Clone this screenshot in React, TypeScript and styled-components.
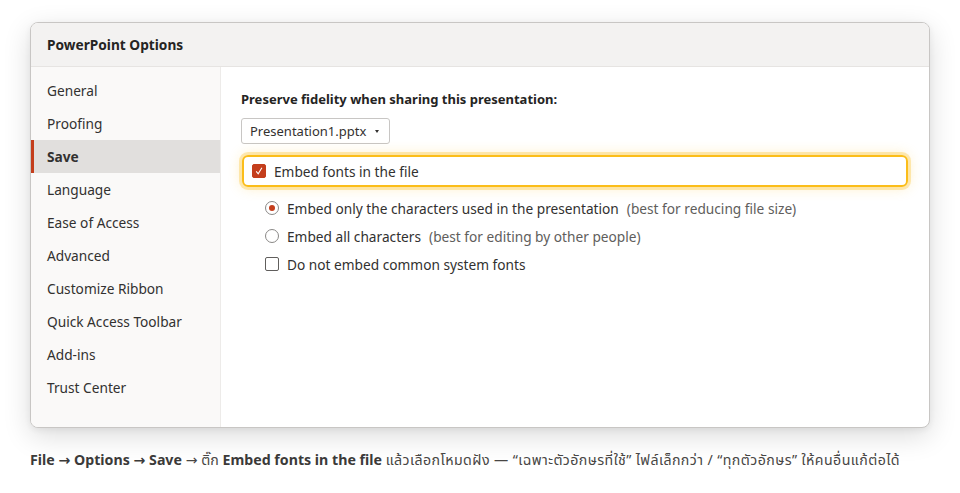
import React from "react";
import styled, { createGlobalStyle } from "styled-components";

const Global = createGlobalStyle`
  html, body { margin: 0; padding: 0; background: #ffffff; }
  body { font-family: "Noto Sans", "Noto Sans Thai", "DejaVu Sans", sans-serif; color: #323130; }
  * { box-sizing: border-box; }
`;

const Page = styled.div`
  width: 960px;
  height: 493px;
  padding: 22px 30px 0 30px;
  display: flex;
  flex-direction: column;
`;

const Window = styled.div`
  width: 900px;
  height: 406px;
  border: 1px solid #c8c6c4;
  border-radius: 8px;
  overflow: hidden;
  display: flex;
  flex-direction: column;
  box-shadow: 0 8px 28px rgba(0, 0, 0, 0.14), 0 2px 6px rgba(0, 0, 0, 0.06);
  background: #ffffff;
`;

const Header = styled.div`
  height: 44px;
  flex: none;
  background: #f3f2f1;
  border-bottom: 1px solid #e6e4e2;
  display: flex;
  align-items: center;
  padding-left: 16px;
  font-size: 13.7px;
  font-weight: 700;
  color: #252423;
`;

const Body = styled.div`
  flex: 1;
  display: flex;
  min-height: 0;
`;

const Sidebar = styled.nav`
  width: 190px;
  flex: none;
  background: #faf9f8;
  border-right: 1px solid #edebe9;
  padding-top: 7px;
  display: flex;
  flex-direction: column;
`;

const NavItem = styled.div<{ $active?: boolean }>`
  height: 33px;
  display: flex;
  align-items: center;
  padding-left: 16px;
  font-size: 13.7px;
  color: #323130;
  font-weight: ${(p) => (p.$active ? 700 : 400)};
  background: ${(p) => (p.$active ? "#e1dfdd" : "transparent")};
  box-shadow: ${(p) => (p.$active ? "inset 3px 0 0 #c43e1c" : "none")};
`;

const Content = styled.div`
  flex: 1;
  padding: 23px 20px 0 20px;
  display: flex;
  flex-direction: column;
`;

const SectionTitle = styled.div`
  font-size: 13px;
  font-weight: 700;
  color: #252423;
  line-height: 18px;
`;

const Select = styled.div`
  margin-top: 10px;
  align-self: flex-start;
  height: 26px;
  border: 1px solid #c8c6c4;
  border-radius: 3px;
  display: flex;
  align-items: center;
  gap: 9px;
  padding: 0 10px 0 8px;
  font-size: 13px;
  color: #323130;
  background: #fff;
`;

const Caret = styled.span`
  width: 0;
  height: 0;
  border-left: 2.5px solid transparent;
  border-right: 2.5px solid transparent;
  border-top: 3px solid #323130;
`;

const HighlightRow = styled.div`
  margin-top: 11px;
  margin-left: 1px;
  width: 666px;
  height: 32px;
  border: 2px solid #fbbd19;
  border-radius: 6px;
  box-shadow: 0 0 0 3px rgba(251, 189, 25, 0.3), 0 0 14px rgba(251, 189, 25, 0.3);
  display: flex;
  align-items: center;
  gap: 8px;
  padding-left: 8px;
  font-size: 13.7px;
  color: #323130;
`;

const CheckBox = styled.span<{ $checked?: boolean }>`
  width: 14px;
  height: 14px;
  flex: none;
  border-radius: 2px;
  border: 1px solid ${(p) => (p.$checked ? "#c43e1c" : "#605e5c")};
  background: ${(p) => (p.$checked ? "#c43e1c" : "#fff")};
  display: flex;
  align-items: center;
  justify-content: center;
`;

const Options = styled.div`
  margin-top: 7px;
  padding-left: 24px;
  display: flex;
  flex-direction: column;
`;

const OptionRow = styled.div`
  height: 28px;
  display: flex;
  align-items: center;
  gap: 8px;
  font-size: 13.7px;
  color: #323130;
`;

const Radio = styled.span<{ $checked?: boolean }>`
  width: 14px;
  height: 14px;
  flex: none;
  border-radius: 50%;
  border: 1px solid #8a8886;
  background: #fff;
  display: flex;
  align-items: center;
  justify-content: center;
  &::after {
    content: "";
    width: 6px;
    height: 6px;
    border-radius: 50%;
    background: ${(p) => (p.$checked ? "#c43e1c" : "transparent")};
  }
`;

const Hint = styled.span`
  color: #605e5c;
`;

const Caption = styled.p`
  margin: 23px 0 0 0;
  font-size: 14.2px;
  color: #484644;
  line-height: 18px;
  white-space: nowrap;
  b { color: #3b3a39; font-weight: 700; }
`;

const ThaiText = styled.span`
  letter-spacing: 0.42px;
`;

const navItems = [
  "General",
  "Proofing",
  "Save",
  "Language",
  "Ease of Access",
  "Advanced",
  "Customize Ribbon",
  "Quick Access Toolbar",
  "Add-ins",
  "Trust Center",
];

export default function App() {
  return (
    <>
      <Global />
      <Page>
        <Window>
          <Header>PowerPoint Options</Header>
          <Body>
            <Sidebar>
              {navItems.map((n) => (
                <NavItem key={n} $active={n === "Save"}>
                  {n}
                </NavItem>
              ))}
            </Sidebar>
            <Content>
              <SectionTitle>Preserve fidelity when sharing this presentation:</SectionTitle>
              <Select>
                Presentation1.pptx <Caret />
              </Select>
              <HighlightRow>
                <CheckBox $checked>
                  <svg width="10" height="10" viewBox="0 0 10 10">
                    <path d="M2.2 5.4 L4.2 7.8 L7.9 1.8" fill="none" stroke="#fff" strokeWidth="1.1" />
                  </svg>
                </CheckBox>
                Embed fonts in the file
              </HighlightRow>
              <Options>
                <OptionRow>
                  <Radio $checked />
                  Embed only the characters used in the presentation
                  <Hint>(best for reducing file size)</Hint>
                </OptionRow>
                <OptionRow>
                  <Radio />
                  Embed all characters
                  <Hint>(best for editing by other people)</Hint>
                </OptionRow>
                <OptionRow>
                  <CheckBox />
                  Do not embed common system fonts
                </OptionRow>
              </Options>
            </Content>
          </Body>
        </Window>
        <Caption>
          <b>File → Options → Save</b> → ติ๊ก <b>Embed fonts in the file</b>{" "}
          <ThaiText>แล้วเลือกโหมดฝัง — “เฉพาะตัวอักษรที่ใช้” ไฟล์เล็กกว่า / “ทุกตัวอักษร” ให้คนอื่นแก้ต่อได้</ThaiText>
        </Caption>
      </Page>
    </>
  );
}
